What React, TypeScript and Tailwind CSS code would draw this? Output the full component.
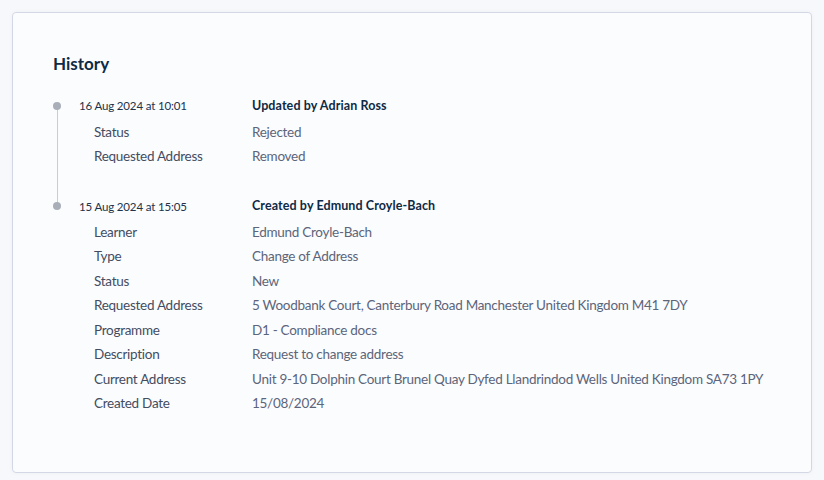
import React from "react";

type Row = [string, string];
type Entry = { date: string; title: string; rows: Row[] };

const entries: Entry[] = [
  {
    date: "16 Aug 2024 at 10:01",
    title: "Updated by Adrian Ross",
    rows: [
      ["Status", "Rejected"],
      ["Requested Address", "Removed"],
    ],
  },
  {
    date: "15 Aug 2024 at 15:05",
    title: "Created by Edmund Croyle-Bach",
    rows: [
      ["Learner", "Edmund Croyle-Bach"],
      ["Type", "Change of Address"],
      ["Status", "New"],
      ["Requested Address", "5 Woodbank Court, Canterbury Road Manchester United Kingdom M41 7DY"],
      ["Programme", "D1 - Compliance docs"],
      ["Description", "Request to change address"],
      ["Current Address", "Unit 9-10 Dolphin Court Brunel Quay Dyfed Llandrindod Wells United Kingdom SA73 1PY"],
      ["Created Date", "15/08/2024"],
    ],
  },
];

export default function App() {
  return (
    <div
      className="w-[824px] h-[480px] bg-[#f7f8fb] p-3"
      style={{ fontFamily: "Lato, 'Noto Sans', sans-serif" }}
    >
      <div className="h-[461px] bg-[#fbfcfe] border border-[#d4d8e6] rounded-[4px] px-10 pt-[39px] shadow-[0_0_4px_rgba(30,40,80,0.04)]">
        <h2 className="text-[17px] leading-6 font-bold text-[#0e2a45]">History</h2>
        <div className="mt-[20px]">
          {entries.map((e, i) => {
            const last = i === entries.length - 1;
            return (
              <div key={i} className="relative flex">
                {!last && (
                  <div className="absolute left-[4px] top-[10px] bottom-[-10px] w-px bg-[#c8cdd9]" />
                )}
                <div className="w-2 shrink-0 flex flex-col">
                  <div className="h-5 flex items-center">
                    <div className="w-2 h-2 rounded-full bg-[#a9aeb8] relative" />
                  </div>
                </div>
                <div className={`flex-1 ${last ? "" : "pb-[27.4px]"}`}>
                  <div className="h-5 flex items-center whitespace-nowrap">
                    <div className="w-[191px] shrink-0 pl-[18px] text-[11.5px] tracking-[-0.15px] text-[#22324a]">{e.date}</div>
                    <div className="text-[12.5px] tracking-[0.1px] font-bold text-[#0e2a45]">{e.title}</div>
                  </div>
                  <div className="mt-[3.8px]">
                    {e.rows.map(([k, v], j) => (
                      <div key={j} className="flex leading-[24.5px] text-[13.5px] tracking-[-0.28px] whitespace-nowrap">
                        <div className="w-[191px] shrink-0 pl-[33px] text-[#434c61]">{k}</div>
                        <div className="text-[#5c657a]">{v}</div>
                      </div>
                    ))}
                  </div>
                </div>
              </div>
            );
          })}
        </div>
      </div>
    </div>
  );
}
